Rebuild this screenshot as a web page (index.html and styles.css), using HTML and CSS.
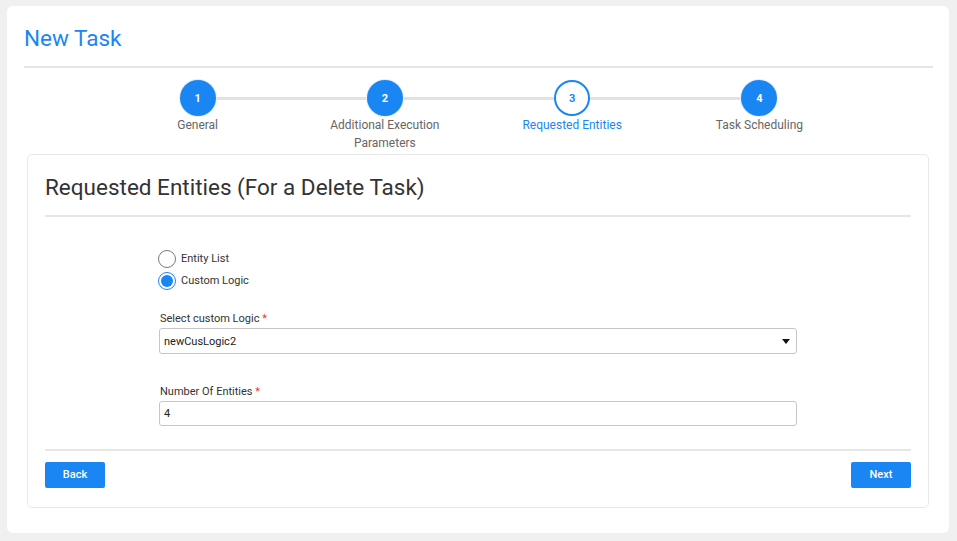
FILE: index.html
```html
<!DOCTYPE html>
<html>
<head>
<meta charset="utf-8">
<link rel="stylesheet" href="styles.css">
</head>
<body>
<div class="page">
  <div class="card">
    <h1 class="title">New Task</h1>
    <div class="rule top"></div>
    <div class="stepper">
      <div class="step done">
        <div class="dot">1</div>
        <div class="label">General</div>
      </div>
      <div class="step done">
        <div class="dot">2</div>
        <div class="label">Additional Execution Parameters</div>
      </div>
      <div class="step active">
        <div class="dot">3</div>
        <div class="label">Requested Entities</div>
      </div>
      <div class="step done last">
        <div class="dot">4</div>
        <div class="label">Task Scheduling</div>
      </div>
    </div>
    <div class="panel">
      <h2 class="panel-title">Requested Entities (For a Delete Task)</h2>
      <div class="rule top"></div>
      <div class="form">
        <div class="radios">
          <div class="radio-row"><span class="radio"></span><span class="radio-label">Entity List</span></div>
          <div class="radio-row"><span class="radio checked"></span><span class="radio-label">Custom Logic</span></div>
        </div>
        <div class="field first">
          <div class="field-label">Select custom Logic <span class="req">*</span></div>
          <div class="select">
            <span>newCusLogic2</span>
            <svg class="arrow" width="8" height="5" viewBox="0 0 8 5"><path d="M0 0H8L4 5Z" fill="#111"/></svg>
          </div>
        </div>
        <div class="field second">
          <div class="field-label">Number Of Entities <span class="req">*</span></div>
          <div class="input">4</div>
        </div>
      </div>
      <div class="rule bottom"></div>
      <div class="actions">
        <button class="btn">Back</button>
        <button class="btn">Next</button>
      </div>
    </div>
  </div>
</div>
</body>
</html>
```

FILE: styles.css
```css
* { box-sizing: border-box; }
html, body { margin: 0; padding: 0; }
body {
  background: #f0f0f0;
  font-family: Roboto, "Liberation Sans", sans-serif;
  color: #333;
}
.page {
  padding: 6px 8px 8px 7px;
}
.card {
  background: #fff;
  border-radius: 6px;
  height: 527px;
  padding: 19px 16px 25px 17px;
}
.title {
  margin: 0;
  font-size: 22.5px;
  line-height: 26px;
  font-weight: 400;
  color: #1a86f4;
}
.rule {
  height: 2px;
  background: #e6e6e6;
}
.rule.top { margin-top: 15px; }
.stepper {
  display: flex;
  width: 749px;
  margin: 12px auto 0;
}
.step {
  flex: 1;
  display: flex;
  flex-direction: column;
  align-items: center;
  position: relative;
}
.step::after {
  content: "";
  position: absolute;
  left: 50%;
  width: 100%;
  top: 17px;
  height: 3px;
  background: #e2e2e2;
  z-index: 0;
}
.step.last::after { display: none; }
.dot {
  position: relative;
  z-index: 1;
  width: 36px;
  height: 36px;
  border-radius: 50%;
  background: #1a86f4;
  color: #fff;
  font-size: 11px;
  font-weight: 700;
  display: flex;
  align-items: center;
  justify-content: center;
  box-shadow: 0 0 0 1px #e6eefa;
}
.step.active .dot {
  background: #fff;
  border: 2px solid #1a86f4;
  color: #1a86f4;
  box-shadow: none;
}
.label {
  margin-top: 1px;
  font-size: 12px;
  line-height: 17.5px;
  color: #666;
  text-align: center;
  max-width: 130px;
}
.step.active .label { color: #1a86f4; }
.panel {
  margin: 2px 4px 0 3px;
  border: 1px solid #e8e8e8;
  border-radius: 5px;
  padding: 19px 17px 19px 17px;
}
.panel-title {
  margin: 0;
  font-size: 22.5px;
  line-height: 26px;
  font-weight: 400;
  color: #333;
}
.form {
  width: 638px;
  margin: 33px auto 0;
}
.radios {
  display: flex;
  flex-direction: column;
  gap: 4px;
}
.radio-row {
  display: flex;
  align-items: center;
  height: 18px;
}
.radio {
  width: 18px;
  height: 18px;
  border-radius: 50%;
  border: 1px solid #7a7a7a;
  margin-left: -1px;
  display: flex;
  align-items: center;
  justify-content: center;
}
.radio.checked {
  border-color: #1a86f4;
}
.radio.checked::before {
  content: "";
  width: 12px;
  height: 12px;
  border-radius: 50%;
  background: #1a86f4;
}
.radio-label {
  margin-left: 5px;
  font-size: 11px;
  line-height: 16px;
  padding-bottom: 1px;
  color: #333;
}
.field.first { margin-top: 25px; }
.field.second { margin-top: 34px; }
.field-label {
  font-size: 11px;
  line-height: 8px;
  padding-bottom: 5px;
  color: #333;
  padding-left: 1px;
}
.req { color: #e53935; }
.select, .input {
  border: 1px solid #c6c6c6;
  border-radius: 3px;
  font-size: 11px;
  color: #222;
  padding-left: 4px;
  display: flex;
  align-items: center;
}
.select {
  height: 26px;
  justify-content: space-between;
  padding-right: 6px;
}
.input { height: 25px; padding-bottom: 1px; }
.rule.bottom { margin-top: 23px; }
.actions {
  margin-top: 11px;
  display: flex;
  justify-content: space-between;
}
.btn {
  width: 60px;
  height: 26px;
  border: none;
  border-radius: 2px;
  background: #1a86f4;
  color: #fff;
  font-family: Roboto, "Liberation Sans", sans-serif;
  font-size: 11px;
  font-weight: 500;
  padding: 0 0 1px;
}
```
